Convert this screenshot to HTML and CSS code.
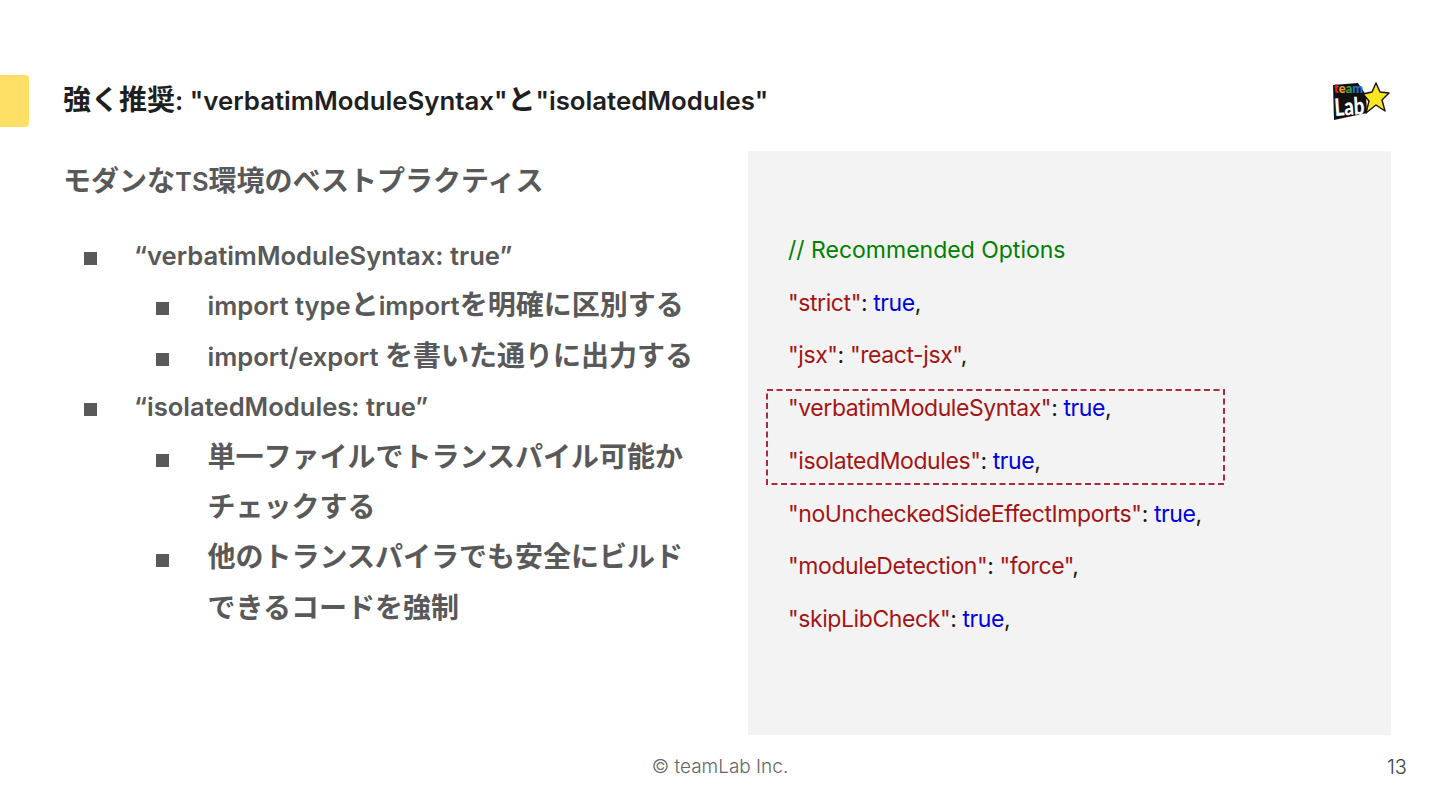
FILE: index.html
```html
<!DOCTYPE html>
<html lang="ja">
<head>
<meta charset="utf-8">
<title>強く推奨</title>
<link rel="stylesheet" href="styles.css">
</head>
<body>
<main class="slide">
  <header class="head">
    <div class="tab"></div>
    <h1 class="title">強く推奨<span class="lat">: "verbatimModuleSyntax"</span>と<span class="lat">"isolatedModules"</span></h1>
    <svg class="logo" width="60" height="42" viewBox="0 0 60 42">
      <path d="M3 5 L28 3 L36 15 L37 33 L4 40 Z" fill="#111"/>
      <text class="logo-team" x="4" y="13" textLength="29" lengthAdjust="spacingAndGlyphs"><tspan fill="#e0262c">t</tspan><tspan fill="#eda21f">e</tspan><tspan fill="#35a33f">a</tspan><tspan fill="#1e78d0">m</tspan></text>
      <text class="logo-lab" x="5" y="36" textLength="30" lengthAdjust="spacingAndGlyphs" transform="rotate(-4 5 36)">Lab</text>
      <path d="M46 3 L50 12 L59 13 L52 20 L55 31 L46 25 L36 33 L39 21 L33 14 L42 12 Z" fill="#ffe51f" stroke="#111" stroke-width="1.4" stroke-linejoin="round"/>
    </svg>
  </header>
  <div class="columns">
    <section class="left">
      <h2 class="sub">モダンな<span class="lat">TS</span>環境のベストプラクティス</h2>
      <ul class="list">
        <li class="item"><span class="lat">“verbatimModuleSyntax: true”</span></li>
        <li class="item nested"><span class="lat">import type</span>と<span class="lat">import</span>を明確に区別する</li>
        <li class="item nested"><span class="lat">import/export </span>を書いた通りに出力する</li>
        <li class="item"><span class="lat">“isolatedModules: true”</span></li>
        <li class="item nested">単一ファイルでトランスパイル可能かチェックする</li>
        <li class="item nested">他のトランスパイラでも安全にビルドできるコードを強制</li>
      </ul>
    </section>
    <section class="code">
      <div class="line comment">// Recommended Options</div>
      <div class="line"><span class="str">"strict"</span>: <span class="kw">true</span>,</div>
      <div class="line"><span class="str">"jsx"</span>: <span class="str">"react-jsx"</span>,</div>
      <div class="line"><span class="str">"verbatimModuleSyntax"</span>: <span class="kw">true</span>,</div>
      <div class="line"><span class="str">"isolatedModules"</span>: <span class="kw">true</span>,</div>
      <div class="line"><span class="str">"noUncheckedSideEffectImports"</span>: <span class="kw">true</span>,</div>
      <div class="line"><span class="str">"moduleDetection"</span>: <span class="str">"force"</span>,</div>
      <div class="line"><span class="str">"skipLibCheck"</span>: <span class="kw">true</span>,</div>
      <svg class="highlight" width="460" height="98" viewBox="0 0 460 98">
        <rect class="highlight-box" x="1" y="1" width="457" height="94"/>
      </svg>
    </section>
  </div>
  <footer class="foot">
    <span class="copy">© teamLab Inc.</span>
    <span class="page">13</span>
  </footer>
</main>
</body>
</html>
```
FILE: styles.css
```css
* { box-sizing: border-box; }
html, body { margin: 0; padding: 0; background: #fff; }
body { font-family: "Noto Sans CJK JP", sans-serif; }
.lat { font-family: Inter, "Noto Sans CJK JP", sans-serif; font-size: 25.6px; font-weight: 600; line-height: 0; }
.slide { width: 1440px; height: 810px; overflow: hidden; display: flex; flex-direction: column; padding-top: 75px; }
.head { display: flex; align-items: center; height: 52px; flex: none; }
.tab { width: 29px; height: 52px; background: #ffe066; border-radius: 0 4px 4px 0; flex: none; }
.title { margin: -7px 0 0 34px; font-size: 28px; font-weight: 700; line-height: 52px; color: #1f1f1f; flex: 1; white-space: nowrap; }
.title .lat { font-size: 25.8px; }
.logo { flex: none; margin-right: 50px; }
.logo-team { font: 900 13px Lato, sans-serif; }
.logo-lab { font: 900 24px Lato, sans-serif; fill: #fff; }
.columns { display: flex; height: 584px; margin-top: 24px; flex: none; }
.left { width: 704px; padding-left: 63px; flex: none; color: #595959; }
.sub { margin: -1px 0 0; font-size: 28px; font-weight: 700; line-height: 58px; white-space: nowrap; }
.list { list-style: none; margin: 20px 0 0; padding: 0; }
.item { position: relative; font-size: 28px; font-weight: 700; line-height: 50.4px; padding-left: 71px; }
.item::before { content: ""; position: absolute; left: 21px; top: 24px; width: 13px; height: 13px; background: #595959; }
.nested { padding-left: 144.5px; }
.nested::before { left: 93px; }
.code { position: relative; width: 643px; margin-left: 44px; height: 584px; background: #f3f3f3; padding: 73px 0 0 40px; flex: none; }
.line { font-family: Inter, sans-serif; font-size: 23px; line-height: 52.7px; color: #1a1a1a; letter-spacing: -0.42px; white-space: nowrap; }
.comment { color: #008000; letter-spacing: 0; }
.str { color: #a31515; }
.kw { color: #0000e0; }
.highlight { position: absolute; left: 18px; top: 238px; }
.highlight-box { fill: none; stroke: #ab2b3e; stroke-width: 2; stroke-dasharray: 6 3.5; }
.foot { flex: 1; position: relative; display: flex; justify-content: center; padding-top: 18px; font-family: Inter, sans-serif; }
.copy { font-size: 19px; line-height: 28px; color: #666; font-weight: 300; }
.page { position: absolute; right: 33px; top: 18px; font-size: 20px; line-height: 28px; color: #404040; font-weight: 300; }
```
